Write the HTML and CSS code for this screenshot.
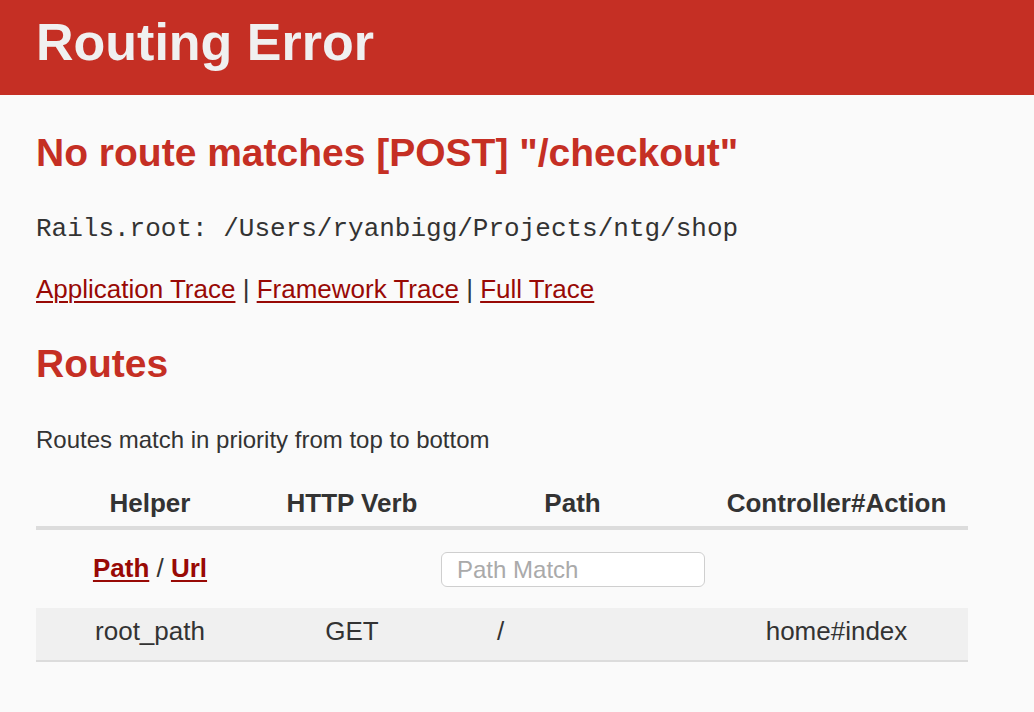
FILE: index.html
```html
<!DOCTYPE html>
<html>
<head>
<meta charset="utf-8">
<title>Routing Error</title>
<link rel="stylesheet" href="styles.css">
</head>
<body>
<header class="top">
  <h1 class="top-title">Routing Error</h1>
</header>
<main class="container">
  <h2 class="error-title">No route matches [POST] "/checkout"</h2>
  <p class="root-line">Rails.root: /Users/ryanbigg/Projects/ntg/shop</p>
  <p class="trace-links"><a href="#">Application Trace</a> | <a href="#">Framework Trace</a> | <a href="#">Full Trace</a></p>
  <h2 class="routes-title">Routes</h2>
  <p class="routes-note">Routes match in priority from top to bottom</p>
  <table class="route-table">
    <colgroup>
      <col class="c-helper">
      <col class="c-verb">
      <col class="c-path">
      <col class="c-action">
    </colgroup>
    <thead>
      <tr>
        <th>Helper</th>
        <th>HTTP Verb</th>
        <th>Path</th>
        <th>Controller#Action</th>
      </tr>
    </thead>
    <tbody>
      <tr class="filter-row">
        <td class="center"><a href="#" class="bold-link">Path</a> / <a href="#" class="bold-link">Url</a></td>
        <td></td>
        <td class="filter-cell"><input class="path-match" type="search" placeholder="Path Match"></td>
        <td></td>
      </tr>
      <tr class="route-row">
        <td class="center">root_path</td>
        <td class="center">GET</td>
        <td class="path-cell">/</td>
        <td class="center">home#index</td>
      </tr>
    </tbody>
  </table>
</main>
</body>
</html>
```

FILE: styles.css
```css
html, body {
  margin: 0;
  padding: 0;
}

body {
  background: #fafafa;
  color: #333;
  font-family: "Liberation Sans", Arial, Helvetica, sans-serif;
}

.top {
  background: #c52f24;
  height: 95px;
  box-sizing: border-box;
  padding: 13px 36px 0;
}

.top-title {
  margin: 0;
  font-size: 52px;
  line-height: 58px;
  font-weight: bold;
  color: #f0f0f0;
}

.container {
  padding: 0 36px;
}

.error-title,
.routes-title {
  margin: 0;
  font-size: 39px;
  line-height: 44px;
  font-weight: bold;
  color: #c52f24;
}

.error-title {
  padding-top: 36px;
}

.root-line {
  margin: 39px 0 0;
  font-family: "Liberation Mono", "Courier New", monospace;
  font-size: 26px;
  line-height: 30px;
  color: #333;
}

.trace-links {
  margin: 30px 0 0;
  font-size: 26px;
  line-height: 30px;
  color: #333;
}

a {
  color: #980905;
  text-decoration: underline;
  text-decoration-thickness: 2px;
  text-underline-offset: 3px;
}

.routes-title {
  margin-top: 38px;
}

.routes-note {
  margin: 40px 0 0;
  font-size: 24px;
  line-height: 28px;
}

.route-table {
  margin-top: 34px;
  width: 932px;
  table-layout: fixed;
  border-collapse: collapse;
  font-size: 26px;
  line-height: 30px;
}

.c-helper { width: 228px; }
.c-verb { width: 176px; }
.c-path { width: 265px; }
.c-action { width: 263px; }

.route-table th {
  padding: 0 0 8px;
  font-weight: bold;
  text-align: center;
  border-bottom: 4px solid #dcdcdc;
}

.route-table td {
  padding: 0;
}

.filter-row td {
  height: 75px;
  vertical-align: middle;
}

.route-table .filter-row td.center {
  padding-bottom: 3px;
}

.center {
  text-align: center;
}

.bold-link {
  font-weight: bold;
}

.route-table .filter-row td.filter-cell {
  padding: 2px 0 1px 1px;
}

.path-match {
  display: block;
  box-sizing: border-box;
  width: 264px;
  height: 35px;
  margin: 0;
  padding: 0 0 0 15px;
  border: 1px solid #cfcfcf;
  border-radius: 6px;
  background: #fff;
  font-family: "Liberation Sans", Arial, sans-serif;
  font-size: 24px;
  color: #333;
  outline: none;
  -webkit-appearance: none;
  appearance: none;
}

.path-match::placeholder {
  color: #aaa;
}

.route-row {
  background: #f0f0f0;
  border-bottom: 2px solid #dcdcdc;
}

.route-row td {
  padding: 8px 0 14px;
}

.route-row td.path-cell {
  padding-left: 57px;
}
```
